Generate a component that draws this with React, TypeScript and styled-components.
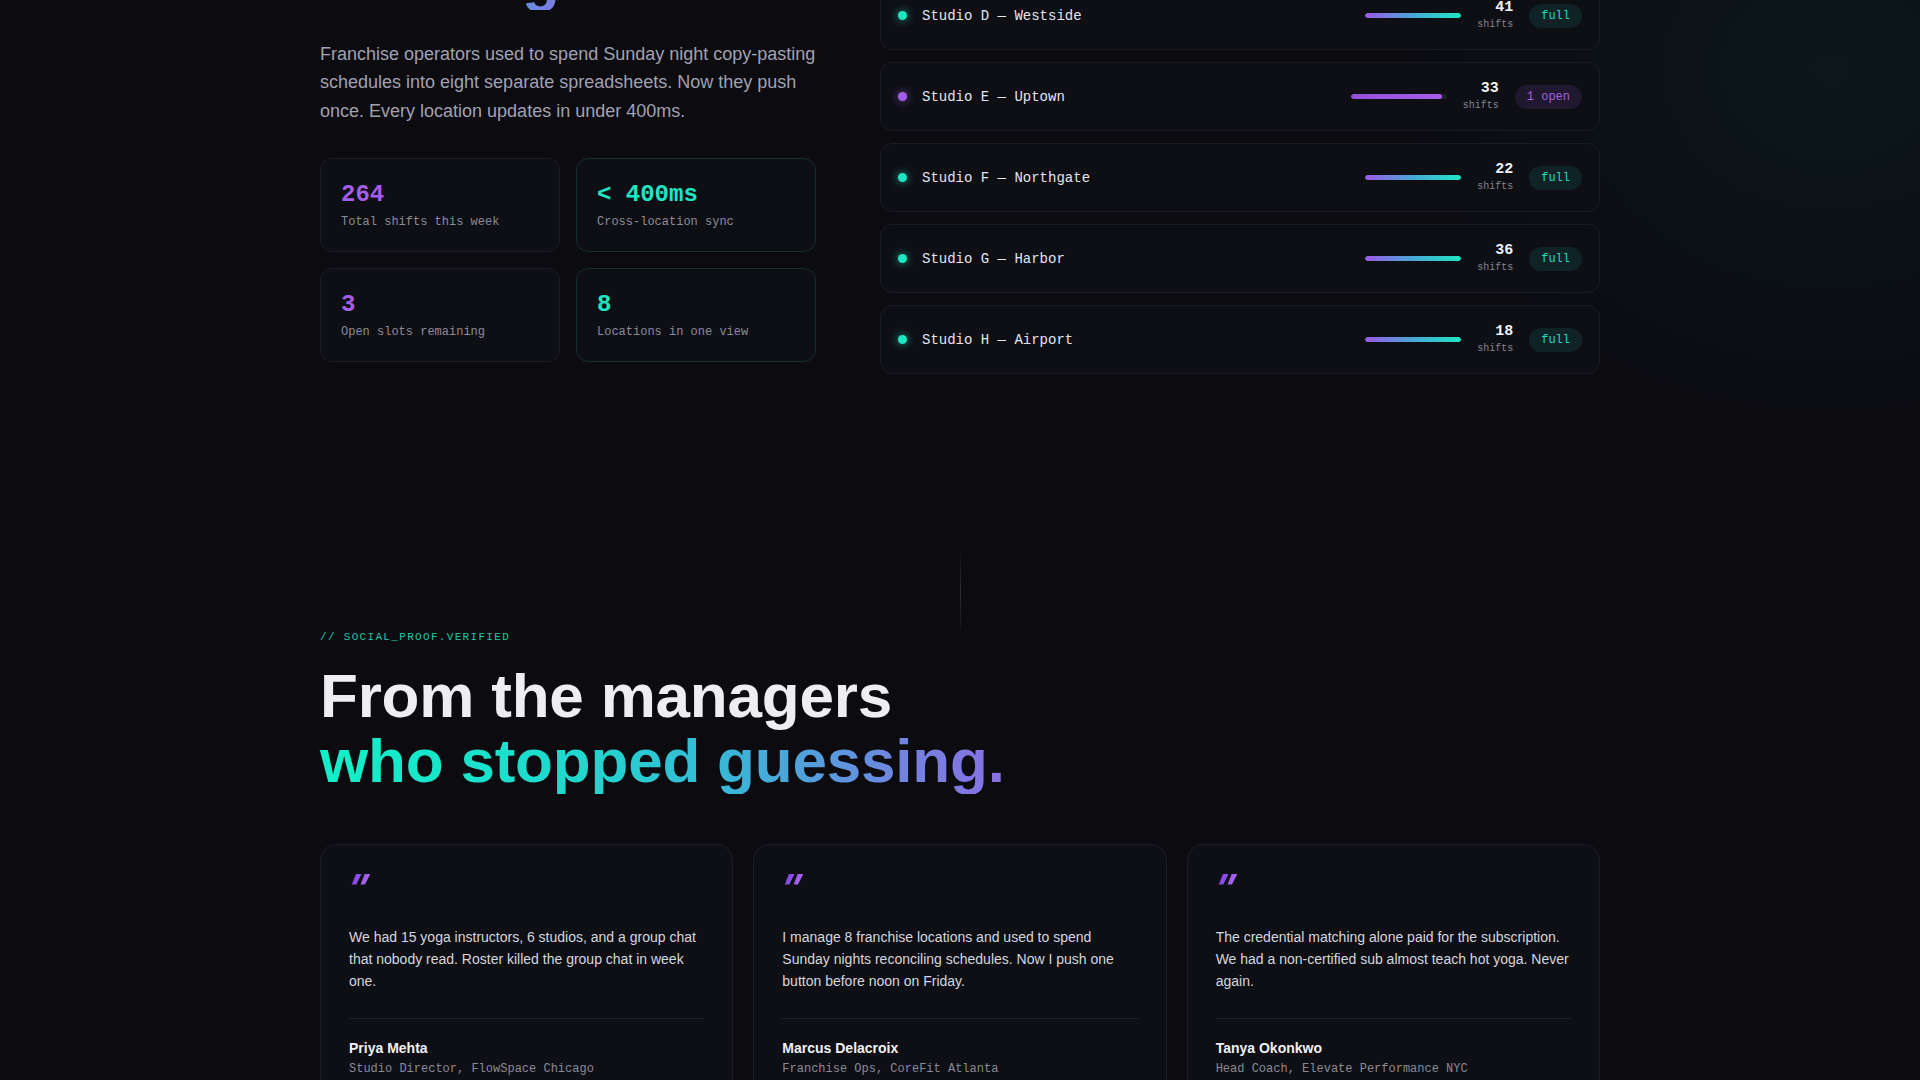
import styled, { createGlobalStyle } from 'styled-components';

const GlobalStyle = createGlobalStyle`
    * {
        box-sizing: border-box;
    }
    html {
        background: radial-gradient(620px 520px at 1830px 70px, rgba(20, 170, 160, 0.08), transparent 70%), #0b0b10;
        background-attachment: fixed;
    }
    body {
        margin: 0;
        overflow: hidden;
        color: #ececf1;
        font-family: 'Liberation Sans', Arial, sans-serif;
    }
`;

const MONO = `'Liberation Mono', 'DejaVu Sans Mono', monospace`;
const TEAL = '#1ee6c3';
const PURPLE = '#a45ee8';

const Container = styled.div`
    width: 1280px;
    margin: 0 auto;
`;

// the page is photographed part way down, so the first section starts above the fold
const SyncSection = styled.section`
    margin-top: -262px;
    padding-bottom: 173px;
`;

const SyncGrid = styled(Container)`
    display: grid;
    grid-template-columns: 496px 1fr;
    gap: 64px;
    align-items: start;
`;

const Intro = styled.div`
    padding-top: 43px;
`;

const Eyebrow = styled.div`
    font-family: ${MONO};
    font-size: 11px;
    line-height: 1.4;
    letter-spacing: 0.12em;
    text-transform: uppercase;
    color: #20c8a9;
`;

const Heading = styled.h2`
    margin: 18px 0 0;
    font-size: 62px;
    line-height: 1.05;
    letter-spacing: -0.2px;
    font-weight: 700;
    color: #ededf2;
`;

const HeadLine = styled.span`
    display: block;
`;

const GradientLine = styled.span`
    display: block;
    width: fit-content;
    background: linear-gradient(90deg, #12f0c8 0%, #1fd8cd 38%, #3eb2d8 62%, #6f86e0 84%, #8a6fe4 100%);
    -webkit-background-clip: text;
    background-clip: text;
    color: transparent;
`;

const Lead = styled.p`
    margin: 30px 0 0;
    font-size: 18px;
    line-height: 1.6;
    color: #a1a1b0;
`;

const StatGrid = styled.div`
    margin-top: 32px;
    display: grid;
    grid-template-columns: 1fr 1fr;
    gap: 16px;
`;

type Tone = 'purple' | 'teal';

const StatCard = styled.div<{ $tone: Tone }>`
    padding: 20px;
    border-radius: 12px;
    background: #0e0f15;
    border: 1px solid ${(p) => (p.$tone === 'teal' ? '#14302c' : '#1c1d26')};
`;

const StatValue = styled.div<{ $tone: Tone }>`
    font-family: ${MONO};
    font-size: 24px;
    font-weight: 700;
    line-height: 1.3;
    color: ${(p) => (p.$tone === 'teal' ? TEAL : PURPLE)};
`;

const StatLabel = styled.div`
    margin-top: 4px;
    font-family: ${MONO};
    font-size: 12px;
    line-height: 1.4;
    color: #8b8b98;
`;

const LocationList = styled.div`
    display: flex;
    flex-direction: column;
    gap: 12px;
`;

const LocationRow = styled.div`
    height: 69px;
    padding: 0 17px;
    display: flex;
    align-items: center;
    background: #0e0f15;
    border: 1px solid #1a1b24;
    border-radius: 12px;
`;

const Dot = styled.span<{ $open: boolean }>`
    width: 9px;
    height: 9px;
    flex: none;
    border-radius: 50%;
    background: ${(p) => (p.$open ? PURPLE : TEAL)};
    box-shadow: 0 0 8px ${(p) => (p.$open ? 'rgba(164, 94, 232, 0.7)' : 'rgba(30, 230, 195, 0.7)')};
`;

const LocationName = styled.span`
    margin-left: 15px;
    font-family: ${MONO};
    font-size: 14px;
    color: #e4e4ec;
`;

const RowMeta = styled.div`
    margin-left: auto;
    display: flex;
    align-items: center;
    gap: 16px;
`;

const Track = styled.div`
    width: 96px;
    height: 5px;
    border-radius: 3px;
    background: #1d1e28;
    overflow: hidden;
`;

const Fill = styled.div<{ $open: boolean }>`
    height: 100%;
    border-radius: 3px;
    background: ${(p) =>
        p.$open ? 'linear-gradient(90deg, #9450dc, #a45ee8)' : 'linear-gradient(90deg, #9a58e6, #48a8d8 50%, #1ee6c3)'};
`;

const Count = styled.div`
    min-width: 36px;
    text-align: right;
    font-family: ${MONO};
`;

const CountValue = styled.div`
    font-size: 15px;
    font-weight: 700;
    line-height: 1;
    color: #f1f1f5;
`;

const CountUnit = styled.div`
    margin-top: 4px;
    font-size: 10px;
    line-height: 1.2;
    color: #84848f;
`;

const Badge = styled.span<{ $open: boolean }>`
    height: 24px;
    padding: 0 12px;
    display: inline-flex;
    align-items: center;
    border-radius: 12px;
    font-family: ${MONO};
    font-size: 12px;
    color: ${(p) => (p.$open ? '#a062e2' : '#22dcbc')};
    background: ${(p) => (p.$open ? 'rgba(164, 94, 232, 0.12)' : 'rgba(30, 230, 195, 0.09)')};
`;

const Divider = styled.div`
    width: 1px;
    height: 83px;
    margin: 0 auto;
    background: linear-gradient(180deg, rgba(42, 43, 54, 0), #2b2c37 55%, rgba(42, 43, 54, 0.3));
`;

const Cards = styled.div`
    margin-top: 50px;
    display: grid;
    grid-template-columns: repeat(3, 1fr);
    gap: 20px;
`;

const QuoteCard = styled.figure`
    margin: 0;
    padding: 28px;
    background: #0e0f15;
    border: 1px solid #1c1d27;
    border-radius: 16px;
`;

const QuoteMark = styled.div`
    width: fit-content;
    height: 32px;
    margin-left: 1px;
    font-size: 42px;
    line-height: 0.75;
    font-weight: 700;
    transform: skewX(-24deg);
    transform-origin: 0 8px;
    background: linear-gradient(90deg, #7d3ee6, #b26cf0);
    -webkit-background-clip: text;
    background-clip: text;
    color: transparent;
`;

const QuoteText = styled.blockquote`
    margin: 21px 0 0;
    font-size: 14px;
    line-height: 1.6;
    color: #d6d6de;
`;

const Author = styled.figcaption`
    margin-top: 25px;
    padding-top: 20px;
    border-top: 1px solid #1d1e27;
`;

const AuthorName = styled.div`
    font-size: 14px;
    font-weight: 700;
    line-height: 1.4;
    color: #f0f0f5;
`;

const AuthorRole = styled.div`
    margin-top: 2px;
    font-family: ${MONO};
    font-size: 12px;
    line-height: 1.5;
    color: #8a8a96;
`;

const stats: { value: string; label: string; tone: Tone }[] = [
    { value: '264', label: 'Total shifts this week', tone: 'purple' },
    { value: '< 400ms', label: 'Cross-location sync', tone: 'teal' },
    { value: '3', label: 'Open slots remaining', tone: 'purple' },
    { value: '8', label: 'Locations in one view', tone: 'teal' },
];

const locations = [
    { name: 'Studio A — Downtown', shifts: 44, open: 0 },
    { name: 'Studio B — Midtown', shifts: 31, open: 2 },
    { name: 'Studio C — Eastside', shifts: 39, open: 0 },
    { name: 'Studio D — Westside', shifts: 41, open: 0 },
    { name: 'Studio E — Uptown', shifts: 33, open: 1 },
    { name: 'Studio F — Northgate', shifts: 22, open: 0 },
    { name: 'Studio G — Harbor', shifts: 36, open: 0 },
    { name: 'Studio H — Airport', shifts: 18, open: 0 },
];

const quotes = [
    {
        text: 'We had 15 yoga instructors, 6 studios, and a group chat that nobody read. Roster killed the group chat in week one.',
        name: 'Priya Mehta',
        role: 'Studio Director, FlowSpace Chicago',
    },
    {
        text: 'I manage 8 franchise locations and used to spend Sunday nights reconciling schedules. Now I push one button before noon on Friday.',
        name: 'Marcus Delacroix',
        role: 'Franchise Ops, CoreFit Atlanta',
    },
    {
        text: 'The credential matching alone paid for the subscription. We had a non-certified sub almost teach hot yoga. Never again.',
        name: 'Tanya Okonkwo',
        role: 'Head Coach, Elevate Performance NYC',
    },
];

export default function App() {
    return (
        <>
            <GlobalStyle />
            <SyncSection>
                <SyncGrid>
                    <Intro>
                        <Eyebrow>// multi_location.sync</Eyebrow>
                        <Heading>
                            <HeadLine>One push.</HeadLine>
                            <HeadLine>Every studio.</HeadLine>
                            <GradientLine>Zero lag.</GradientLine>
                        </Heading>
                        <Lead>
                            Franchise operators used to spend Sunday night copy-pasting schedules into eight separate
                            spreadsheets. Now they push once. Every location updates in under 400ms.
                        </Lead>
                        <StatGrid>
                            {stats.map((s) => (
                                <StatCard key={s.label} $tone={s.tone}>
                                    <StatValue $tone={s.tone}>{s.value}</StatValue>
                                    <StatLabel>{s.label}</StatLabel>
                                </StatCard>
                            ))}
                        </StatGrid>
                    </Intro>
                    <LocationList>
                        {locations.map((l) => {
                            const isOpen = l.open > 0;
                            const pct = isOpen ? 95 : 100;
                            return (
                                <LocationRow key={l.name}>
                                    <Dot $open={isOpen} />
                                    <LocationName>{l.name}</LocationName>
                                    <RowMeta>
                                        <Track>
                                            <Fill $open={isOpen} style={{ width: `${pct}%` }} />
                                        </Track>
                                        <Count>
                                            <CountValue>{l.shifts}</CountValue>
                                            <CountUnit>shifts</CountUnit>
                                        </Count>
                                        <Badge $open={isOpen}>{isOpen ? `${l.open} open` : 'full'}</Badge>
                                    </RowMeta>
                                </LocationRow>
                            );
                        })}
                    </LocationList>
                </SyncGrid>
            </SyncSection>
            <Divider />
            <Container>
                <Eyebrow>// social_proof.verified</Eyebrow>
                <Heading>
                    <HeadLine>From the managers</HeadLine>
                    <GradientLine>who stopped guessing.</GradientLine>
                </Heading>
                <Cards>
                    {quotes.map((q) => (
                        <QuoteCard key={q.name}>
                            <QuoteMark>"</QuoteMark>
                            <QuoteText>{q.text}</QuoteText>
                            <Author>
                                <AuthorName>{q.name}</AuthorName>
                                <AuthorRole>{q.role}</AuthorRole>
                            </Author>
                        </QuoteCard>
                    ))}
                </Cards>
            </Container>
        </>
    );
}
